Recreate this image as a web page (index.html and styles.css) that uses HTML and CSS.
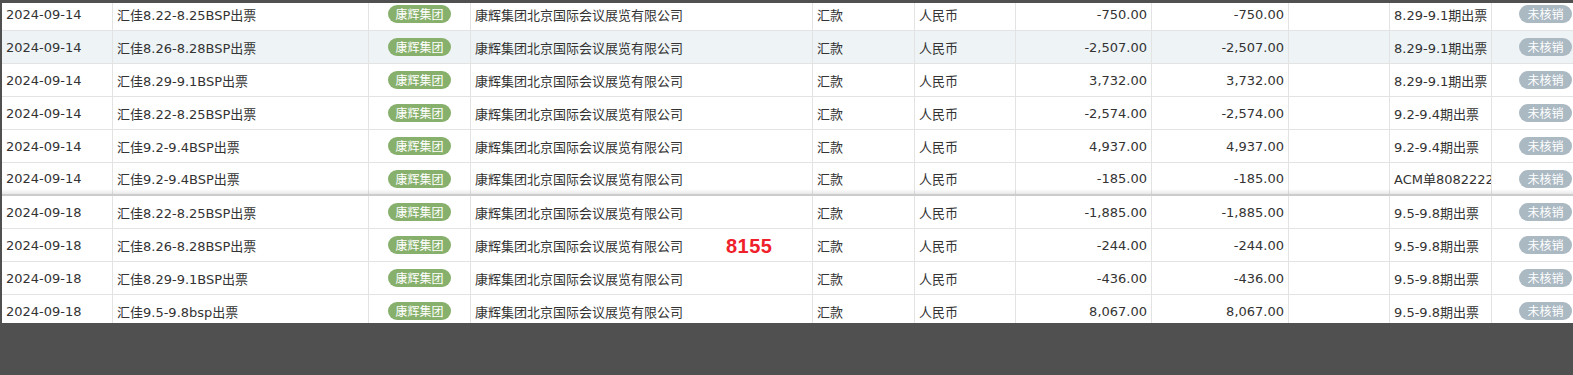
FILE: index.html
```html
<!DOCTYPE html>
<html lang="zh-CN">
<head>
<meta charset="utf-8">
<title>核销列表</title>
<link rel="stylesheet" href="styles.css">
</head>
<body>
<div class="panel">
  <div class="rows">
    <div class="row first">
      <div class="cell">2024-09-14</div><div class="cell">汇佳8.22-8.25BSP出票</div><div class="cell center"><span class="tag green">康辉集团</span></div><div class="cell">康辉集团北京国际会议展览有限公司</div><div class="cell">汇款</div><div class="cell">人民币</div><div class="cell right">-750.00</div><div class="cell right">-750.00</div><div class="cell"></div><div class="cell">8.29-9.1期出票</div><div class="cell center"><span class="tag gray">未核销</span></div>
    </div>
    <div class="row hover">
      <div class="cell">2024-09-14</div><div class="cell">汇佳8.26-8.28BSP出票</div><div class="cell center"><span class="tag green">康辉集团</span></div><div class="cell">康辉集团北京国际会议展览有限公司</div><div class="cell">汇款</div><div class="cell">人民币</div><div class="cell right">-2,507.00</div><div class="cell right">-2,507.00</div><div class="cell"></div><div class="cell">8.29-9.1期出票</div><div class="cell center"><span class="tag gray">未核销</span></div>
    </div>
    <div class="row">
      <div class="cell">2024-09-14</div><div class="cell">汇佳8.29-9.1BSP出票</div><div class="cell center"><span class="tag green">康辉集团</span></div><div class="cell">康辉集团北京国际会议展览有限公司</div><div class="cell">汇款</div><div class="cell">人民币</div><div class="cell right">3,732.00</div><div class="cell right">3,732.00</div><div class="cell"></div><div class="cell">8.29-9.1期出票</div><div class="cell center"><span class="tag gray">未核销</span></div>
    </div>
    <div class="row">
      <div class="cell">2024-09-14</div><div class="cell">汇佳8.22-8.25BSP出票</div><div class="cell center"><span class="tag green">康辉集团</span></div><div class="cell">康辉集团北京国际会议展览有限公司</div><div class="cell">汇款</div><div class="cell">人民币</div><div class="cell right">-2,574.00</div><div class="cell right">-2,574.00</div><div class="cell"></div><div class="cell">9.2-9.4期出票</div><div class="cell center"><span class="tag gray">未核销</span></div>
    </div>
    <div class="row">
      <div class="cell">2024-09-14</div><div class="cell">汇佳9.2-9.4BSP出票</div><div class="cell center"><span class="tag green">康辉集团</span></div><div class="cell">康辉集团北京国际会议展览有限公司</div><div class="cell">汇款</div><div class="cell">人民币</div><div class="cell right">4,937.00</div><div class="cell right">4,937.00</div><div class="cell"></div><div class="cell">9.2-9.4期出票</div><div class="cell center"><span class="tag gray">未核销</span></div>
    </div>
    <div class="row split">
      <div class="cell">2024-09-14</div><div class="cell">汇佳9.2-9.4BSP出票</div><div class="cell center"><span class="tag green">康辉集团</span></div><div class="cell">康辉集团北京国际会议展览有限公司</div><div class="cell">汇款</div><div class="cell">人民币</div><div class="cell right">-185.00</div><div class="cell right">-185.00</div><div class="cell"></div><div class="cell">ACM单80822222</div><div class="cell center"><span class="tag gray">未核销</span></div>
    </div>
    <div class="separator"></div>
    <div class="row">
      <div class="cell">2024-09-18</div><div class="cell">汇佳8.22-8.25BSP出票</div><div class="cell center"><span class="tag green">康辉集团</span></div><div class="cell">康辉集团北京国际会议展览有限公司</div><div class="cell">汇款</div><div class="cell">人民币</div><div class="cell right">-1,885.00</div><div class="cell right">-1,885.00</div><div class="cell"></div><div class="cell">9.5-9.8期出票</div><div class="cell center"><span class="tag gray">未核销</span></div>
    </div>
    <div class="row">
      <div class="cell">2024-09-18</div><div class="cell">汇佳8.26-8.28BSP出票</div><div class="cell center"><span class="tag green">康辉集团</span></div><div class="cell">康辉集团北京国际会议展览有限公司</div><div class="cell">汇款</div><div class="cell">人民币</div><div class="cell right">-244.00</div><div class="cell right">-244.00</div><div class="cell"></div><div class="cell">9.5-9.8期出票</div><div class="cell center"><span class="tag gray">未核销</span></div>
    </div>
    <div class="row">
      <div class="cell">2024-09-18</div><div class="cell">汇佳8.29-9.1BSP出票</div><div class="cell center"><span class="tag green">康辉集团</span></div><div class="cell">康辉集团北京国际会议展览有限公司</div><div class="cell">汇款</div><div class="cell">人民币</div><div class="cell right">-436.00</div><div class="cell right">-436.00</div><div class="cell"></div><div class="cell">9.5-9.8期出票</div><div class="cell center"><span class="tag gray">未核销</span></div>
    </div>
    <div class="row">
      <div class="cell">2024-09-18</div><div class="cell">汇佳9.5-9.8bsp出票</div><div class="cell center"><span class="tag green">康辉集团</span></div><div class="cell">康辉集团北京国际会议展览有限公司</div><div class="cell">汇款</div><div class="cell">人民币</div><div class="cell right">8,067.00</div><div class="cell right">8,067.00</div><div class="cell"></div><div class="cell">9.5-9.8期出票</div><div class="cell center"><span class="tag gray">未核销</span></div>
    </div>
  </div>
  <span class="note">8155</span>
</div>
</body>
</html>
```

FILE: styles.css
```css
html, body {
  margin: 0;
  padding: 0;
}
body {
  background: #505050;
  width: 1573px;
  height: 375px;
  overflow: hidden;
  font-family: "DejaVu Sans", "Noto Sans CJK SC", sans-serif;
  font-size: 13px;
  color: #333333;
}
.panel {
  position: relative;
  margin: 3px 0 0 2px;
  height: 320px;
  background: #ffffff;
  overflow: hidden;
}
.rows {
  display: flex;
  flex-direction: column;
  margin-top: -5px;
  width: 1597px;
}
.row {
  display: grid;
  grid-template-columns: 111px 256px 102px 342px 102px 101px 136px 137px 101px 102px 108px;
  height: 33px;
  box-sizing: border-box;
  border-bottom: 1px solid #e3e3e3;
  background: #ffffff;
}
.row.hover {
  background: #eef3f6;
}
.row.split {
  height: 31px;
  border-bottom: none;
}
.separator {
  position: relative;
  margin-top: -5px;
  height: 5px;
  background: linear-gradient(to bottom, rgba(0,0,0,0), rgba(0,0,0,0.09));
  border-bottom: 2px solid #cccccc;
}
.cell {
  box-sizing: border-box;
  border-right: 1px solid #e3e3e3;
  padding: 0 4px;
  display: flex;
  align-items: center;
  white-space: nowrap;
  overflow: hidden;
  min-width: 0;
}
.cell.right {
  justify-content: flex-end;
}
.cell.center {
  justify-content: center;
}
.tag {
  display: inline-block;
  height: 18px;
  line-height: 18px;
  border-radius: 9px;
  color: #ffffff;
  font-size: 12px;
  font-family: "Noto Sans CJK SC", sans-serif;
}
.tag.green {
  background: #87b06c;
  padding: 0 7px;
}
.tag.gray {
  background: #abb9c3;
  padding: 0 8px;
}
.note {
  position: absolute;
  left: 724px;
  top: 233px;
  font-family: "Liberation Sans", Arial, sans-serif;
  font-weight: bold;
  font-size: 20px;
  line-height: 20px;
  color: #f0202a;
  letter-spacing: 0.5px;
}
```
